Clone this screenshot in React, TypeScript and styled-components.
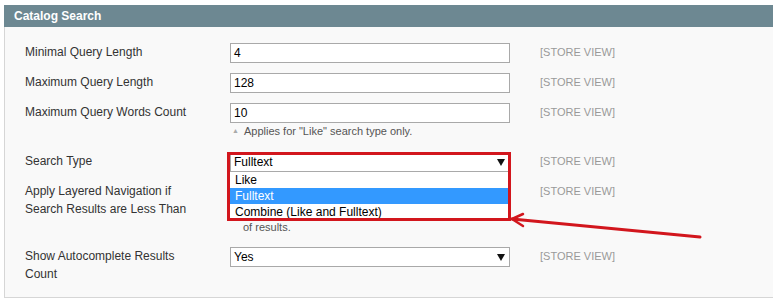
import styled, { createGlobalStyle } from 'styled-components';

const GlobalStyle = createGlobalStyle`
  body {
    margin: 0;
    background: #ffffff;
    font-family: "Liberation Sans", Arial, sans-serif;
  }
`;

const Page = styled.div`
  padding: 5px 0 0 4px;
  width: 773px;
  height: 305px;
  box-sizing: border-box;
  overflow: hidden;
`;

const Section = styled.section`
  display: flex;
  flex-direction: column;
`;

const Header = styled.div`
  height: 22px;
  display: flex;
  align-items: center;
  padding-left: 10px;
  background-color: #6d8892;
  color: #ffffff;
  font-weight: 700;
  font-size: 12px;
`;

const Body = styled.div`
  display: flex;
  flex-direction: column;
  gap: 10px;
  padding: 16px 0 14px 20px;
  background-color: #f9f9f9;
  border-left: 1px solid #d6d6d6;
  border-bottom: 1px solid #d6d6d6;
`;

const Row = styled.div`
  display: grid;
  grid-template-columns: 205px 280px auto;
  align-items: start;
`;

const Label = styled.label`
  font-size: 12px;
  line-height: 18px;
  color: #333333;
`;

const Field = styled.div`
  position: relative;
  display: flex;
  flex-direction: column;
`;

const Input = styled.div`
  height: 20px;
  box-sizing: border-box;
  display: flex;
  align-items: center;
  padding-left: 3px;
  border: 1px solid #a9a9a9;
  background-color: #ffffff;
  font-size: 12px;
  color: #000000;
`;

const Select = styled(Input)`
  justify-content: space-between;
  padding-right: 4px;
`;

const Caret = () => (
  <svg width="8" height="7" viewBox="0 0 8 7">
    <polygon points="0,0 8,0 4,7" fill="#111111" />
  </svg>
);

const Note = styled.div`
  display: flex;
  gap: 5px;
  margin: 0 0 3px;
  padding-left: 2px;
  font-size: 11px;
  line-height: 16px;
  color: #555555;
`;

const NoteMark = styled.span`
  font-size: 7px;
  color: #aaaaaa;
`;

/* second line of a note whose first line sits under the open dropdown */
const NoteTail = styled.div`
  margin: 17px 0 2px;
  padding-left: 13px;
  font-size: 11px;
  line-height: 16px;
  color: #555555;
`;

const Scope = styled.span`
  padding-left: 30px;
  font-size: 11px;
  line-height: 19px;
  color: #999999;
`;

const Highlight = styled.div`
  position: absolute;
  top: 0;
  left: -3px;
  width: 284px;
  height: 69px;
  box-sizing: border-box;
  border: 3px solid #d2161d;
  z-index: 3;
`;

const OptionList = styled.div`
  position: absolute;
  top: 19px;
  left: 0;
  width: 278px;
  display: flex;
  flex-direction: column;
  background-color: #ffffff;
  border-top: 1px solid #a9a9a9;
  z-index: 2;
`;

const Option = styled.div<{ selected?: boolean }>`
  height: 16px;
  display: flex;
  align-items: center;
  padding-left: 5px;
  font-size: 12px;
  background-color: ${({ selected }) => (selected ? '#3399ff' : '#ffffff')};
  color: ${({ selected }) => (selected ? '#ffffff' : '#000000')};
`;

const Pointer = styled.svg`
  position: absolute;
  left: 278px;
  top: 60px;
  z-index: 4;
`;

const App = () => {
  return (
    <Page>
      <GlobalStyle />
      <Section>
        <Header>Catalog Search</Header>
        <Body>
          <Row>
            <Label>Minimal Query Length</Label>
            <Field>
              <Input>4</Input>
            </Field>
            <Scope>[STORE VIEW]</Scope>
          </Row>
          <Row>
            <Label>Maximum Query Length</Label>
            <Field>
              <Input>128</Input>
            </Field>
            <Scope>[STORE VIEW]</Scope>
          </Row>
          <Row>
            <Label>Maximum Query Words Count</Label>
            <Field>
              <Input>10</Input>
              <Note>
                <NoteMark>▲</NoteMark>
                <span>Applies for "Like" search type only.</span>
              </Note>
            </Field>
            <Scope>[STORE VIEW]</Scope>
          </Row>
          <Row>
            <Label>Search Type</Label>
            <Field>
              <Select>
                Fulltext
                <Caret />
              </Select>
              <OptionList>
                <Option>Like</Option>
                <Option selected>Fulltext</Option>
                <Option>Combine (Like and Fulltext)</Option>
              </OptionList>
              <Highlight />
              <Pointer width="200" height="32" viewBox="0 0 200 32">
                <line x1="4" y1="7" x2="192" y2="25" stroke="#d2161d" strokeWidth="3" strokeLinecap="round" />
                <polyline
                  points="15,2 4,7 15,14"
                  fill="none"
                  stroke="#d2161d"
                  strokeWidth="2.5"
                  strokeLinejoin="round"
                  strokeLinecap="round"
                />
              </Pointer>
            </Field>
            <Scope>[STORE VIEW]</Scope>
          </Row>
          <Row>
            <Label>
              Apply Layered Navigation if
              <br />
              Search Results are Less Than
            </Label>
            <Field>
              <Input />
              <NoteTail>of results.</NoteTail>
            </Field>
            <Scope>[STORE VIEW]</Scope>
          </Row>
          <Row>
            <Label>
              Show Autocomplete Results
              <br />
              Count
            </Label>
            <Field>
              <Select>
                Yes
                <Caret />
              </Select>
            </Field>
            <Scope>[STORE VIEW]</Scope>
          </Row>
        </Body>
      </Section>
    </Page>
  );
};

export default App;
